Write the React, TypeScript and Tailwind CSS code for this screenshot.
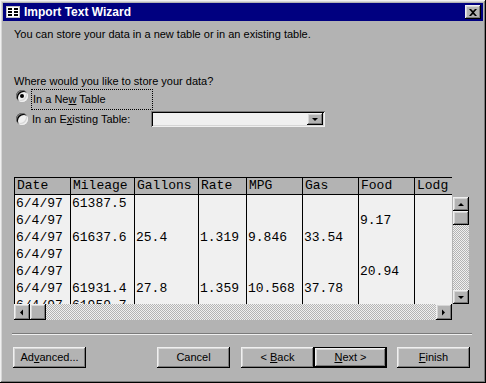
import React from "react";

// bevels used by the classic window chrome
const raised =
  "shadow-[inset_-1px_-1px_#000,inset_1px_1px_#f0f0f0,inset_-2px_-2px_#7a7a7a,inset_2px_2px_#d6d6d6]";
const sunken =
  "shadow-[inset_1px_1px_#7a7a7a,inset_-1px_-1px_#f0f0f0,inset_2px_2px_#000,inset_-2px_-2px_#d6d6d6]";
const track =
  "bg-[image:repeating-conic-gradient(#f0f0f0_0%_25%,#b3b3b3_0%_50%)] bg-[length:2px_2px]";

const columns = [
  { name: "Date", w: "w-[56px]" },
  { name: "Mileage", w: "w-[64px]" },
  { name: "Gallons", w: "w-[64px]" },
  { name: "Rate", w: "w-[48px]" },
  { name: "MPG", w: "w-[56px]" },
  { name: "Gas", w: "w-[56px]" },
  { name: "Food", w: "w-[56px]" },
  { name: "Lodg", w: "w-[56px]" },
];

const rows = [
  ["6/4/97", "61387.5", "", "", "", "", "", ""],
  ["6/4/97", "", "", "", "", "", "9.17", ""],
  ["6/4/97", "61637.6", "25.4", "1.319", "9.846", "33.54", "", ""],
  ["6/4/97", "", "", "", "", "", "", ""],
  ["6/4/97", "", "", "", "", "", "20.94", ""],
  ["6/4/97", "61931.4", "27.8", "1.359", "10.568", "37.78", "", ""],
  ["6/4/97", "61959.7", "", "", "", "", "", ""],
];

function Arrow({ dir }: { dir: "up" | "down" | "left" | "right" }) {
  const pts = {
    up: "1,5 4,2 7,5",
    down: "1,2 4,5 7,2",
    left: "5,0.5 2,3.5 5,6.5",
    right: "2,0.5 5,3.5 2,6.5",
  }[dir];
  return (
    <svg width="8" height="7" viewBox="0 0 8 7">
      <polygon points={pts} fill="#000" />
    </svg>
  );
}

function Radio({ checked }: { checked?: boolean }) {
  return (
    <span className={`relative w-3 h-3 rounded-full bg-[#f0f0f0] flex items-center justify-center ${sunken}`}>
      {checked && <span className="w-1 h-1 rounded-full bg-black" />}
    </span>
  );
}

function Button({ children, isDefault }: { children: React.ReactNode; isDefault?: boolean }) {
  return (
    <div
      className={`w-[73px] h-[21px] flex items-center justify-center bg-[#b3b3b3] ${
        isDefault ? "border border-black" : ""
      } ${raised}`}
    >
      <span>{children}</span>
    </div>
  );
}

export default function App() {
  return (
    <div
      className={`w-[486px] h-[383px] bg-[#b3b3b3] p-[3px] flex flex-col text-[11px] text-black ${raised}`}
      style={{ fontFamily: '"Liberation Sans", Arial, sans-serif' }}
    >
      {/* title bar */}
      <div className="h-[18px] bg-[#000080] flex items-center pl-[2px] pr-[2px]">
        <svg width="14" height="12" viewBox="0 0 14 12" className="mr-[4px] ml-[1px]">
          <rect x="0.5" y="0.5" width="13" height="11" fill="#fff" stroke="#c0c0c0" />
          <rect x="2" y="2" width="4" height="2" fill="#000" />
          <rect x="8" y="2" width="4" height="2" fill="#000" />
          <rect x="2" y="5" width="4" height="2" fill="#000" />
          <rect x="8" y="5" width="4" height="2" fill="#000" />
          <rect x="2" y="8" width="4" height="2" fill="#000" />
          <rect x="8" y="8" width="4" height="2" fill="#000" />
        </svg>
        <span className="text-white font-bold text-[12px]">Import Text Wizard</span>
        <div className={`ml-auto w-4 h-[14px] bg-[#b3b3b3] flex items-center justify-center ${raised}`}>
          <svg width="8" height="7" viewBox="0 0 8 7">
            <path d="M0 0h2l2 2 2-2h2L5 3.5 8 7H6L4 5 2 7H0l3-3.5z" fill="#000" />
          </svg>
        </div>
      </div>

      {/* body */}
      <div className="flex flex-col pl-[11px] pr-[13px]">
        <p className="mt-[6px] leading-[14px]">You can store your data in a new table or in an existing table.</p>
        <p className="mt-[33px] leading-[14px]">Where would you like to store your data?</p>

        <div className="mt-[1px] flex items-start h-[21px]">
          <span className="ml-[2px] mt-[1px]"><Radio checked /></span>
          <span className="ml-[3px] w-[122px] h-[21px] flex items-start pt-[1px] pl-[1px] border border-dotted border-black">
            <span>
              In a Ne<u>w</u> Table
            </span>
          </span>
        </div>
        <div className="mt-[1px] flex items-center h-[16px]">
          <span className="ml-[2px]"><Radio /></span>
          <span className="ml-[4px] w-[119px]">
            In an E<u>x</u>isting Table:
          </span>
          <div className={`w-[174px] h-[16px] bg-[#f0f0f0] flex justify-end p-[2px] ${sunken}`}>
            <div className={`w-4 h-full bg-[#b3b3b3] flex items-center justify-center ${raised}`}>
              <Arrow dir="down" />
            </div>
          </div>
        </div>

        {/* preview grid */}
        <div className="mt-[50px] flex">
          <div className="flex flex-col">
            <div
              className="w-[438px] h-[127px] overflow-hidden border-t border-l border-black bg-[#f0f0f0] flex text-[13px]"
              style={{ fontFamily: '"Liberation Mono", "Courier New", monospace' }}
            >
              {columns.map((c, ci) => (
                <div key={c.name} className={`${c.w} shrink-0 flex flex-col border-r border-black`}>
                  <div className="h-[17px] shrink-0 bg-[#b3b3b3] border-b border-black pl-[2px] leading-[16px] whitespace-nowrap overflow-hidden">
                    {c.name}
                  </div>
                  {rows.map((r, ri) => (
                    <div key={ri} className="h-[17px] shrink-0 pl-[1px] leading-[17px] whitespace-nowrap">
                      {r[ci]}
                    </div>
                  ))}
                </div>
              ))}
            </div>
            {/* horizontal scrollbar */}
            <div className={`w-[438px] h-4 flex ${track}`}>
              <div className={`w-4 h-4 bg-[#b3b3b3] flex items-center justify-center ${raised}`}>
                <Arrow dir="left" />
              </div>
              <div className={`w-4 h-4 bg-[#b3b3b3] ${raised}`} />
              <div className="flex-1" />
              <div className={`w-4 h-4 bg-[#b3b3b3] flex items-center justify-center ${raised}`}>
                <Arrow dir="right" />
              </div>
            </div>
          </div>
          {/* vertical scrollbar */}
          <div className={`ml-[1px] mt-[20px] w-4 h-[107px] flex flex-col ${track}`}>
            <div className={`w-4 h-[14px] bg-[#b3b3b3] flex items-center justify-center ${raised}`}>
              <Arrow dir="up" />
            </div>
            <div className={`w-4 h-[14px] bg-[#b3b3b3] ${raised}`} />
            <div className="flex-1" />
            <div className={`w-4 h-[14px] bg-[#b3b3b3] flex items-center justify-center ${raised}`}>
              <Arrow dir="down" />
            </div>
          </div>
        </div>

        {/* separator */}
        <div className="mt-[13px] -ml-[2px] w-[460px] h-[2px] border-t border-[#7a7a7a] border-b border-b-[#f0f0f0]" />

        {/* buttons */}
        <div className="mt-[12px] flex items-center -ml-[1px]">
          <Button>
            Ad<u>v</u>anced...
          </Button>
          <div className="ml-auto flex items-center">
            <Button>Cancel</Button>
            <div className="ml-[11px]">
              <Button>
                &lt; <u>B</u>ack
              </Button>
            </div>
            <Button isDefault>
              <u>N</u>ext &gt;
            </Button>
            <div className="ml-[10px]">
              <Button>
                <u>F</u>inish
              </Button>
            </div>
          </div>
        </div>
      </div>
    </div>
  );
}
